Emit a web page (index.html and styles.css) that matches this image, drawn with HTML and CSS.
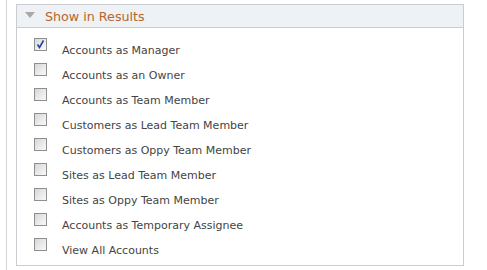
FILE: index.html
```html
<!DOCTYPE html>
<html lang="en">
<head>
    <meta charset="UTF-8">
    <title>Show in Results</title>
    <link rel="stylesheet" href="styles.css">
</head>
<body>
    <div class="page">
        <div class="group">
            <div class="group-head">
                <span class="arrow"></span>
                <span class="group-title">Show in Results</span>
            </div>
            <ul class="opts">
                <li class="opt"><span class="check checked"><svg viewBox="0 0 11 11" width="11" height="11"><path d="M2.5 5.5 L4.5 8.5 L8.5 1.5" fill="none" stroke="#2b3f9e" stroke-width="1.6"/></svg></span><span class="label">Accounts as Manager</span></li>
                <li class="opt"><span class="check"></span><span class="label">Accounts as an Owner</span></li>
                <li class="opt"><span class="check"></span><span class="label">Accounts as Team Member</span></li>
                <li class="opt"><span class="check"></span><span class="label">Customers as Lead Team Member</span></li>
                <li class="opt"><span class="check"></span><span class="label">Customers as Oppy Team Member</span></li>
                <li class="opt"><span class="check"></span><span class="label">Sites as Lead Team Member</span></li>
                <li class="opt"><span class="check"></span><span class="label">Sites as Oppy Team Member</span></li>
                <li class="opt"><span class="check"></span><span class="label">Accounts as Temporary Assignee</span></li>
                <li class="opt"><span class="check"></span><span class="label">View All Accounts</span></li>
            </ul>
        </div>
    </div>
</body>
</html>
```

FILE: styles.css
```css
* {
    margin: 0;
    padding: 0;
    box-sizing: border-box;
}
body {
    background: #fff;
    font-family: "DejaVu Sans", Verdana, sans-serif;
}
.page {
    margin-left: 6px;
    border-left: 1px solid #d4d4d4;
    height: 270px;
    padding: 4px 0 0 9px;
}
.group {
    width: 448px;
    border: 1px solid #c9cdd1;
}
.group-head {
    height: 23px;
    background: #eef2f4;
    border-bottom: 1px solid #c9cdd1;
    display: flex;
    align-items: center;
    padding: 2px 0 0 8px;
}
.arrow {
    width: 0;
    height: 0;
    border-left: 5px solid transparent;
    border-right: 5px solid transparent;
    border-top: 6px solid #a9a9a9;
    margin-right: 10px;
    margin-top: -5px;
}
.group-title {
    font-size: 12.7px;
    color: #b8652a;
    line-height: 20px;
}
.opts {
    list-style: none;
    padding: 7px 0 5px 17px;
}
.opt {
    height: 25px;
    display: flex;
    align-items: flex-start;
}
.check {
    width: 13px;
    height: 13px;
    margin-top: 3px;
    border: 1px solid #8e8f8f;
    background: linear-gradient(135deg, #d6d6d6 0%, #ececec 60%, #f8f8f8 100%);
    display: flex;
    align-items: center;
    justify-content: center;
}
.check.checked {
    background: linear-gradient(135deg, #d8d8d8 0%, #eeeeee 60%, #fafafa 100%);
}
.label {
    margin-left: 15px;
    margin-top: 9px;
    font-size: 11px;
    line-height: 13px;
    color: #444;
}
```
